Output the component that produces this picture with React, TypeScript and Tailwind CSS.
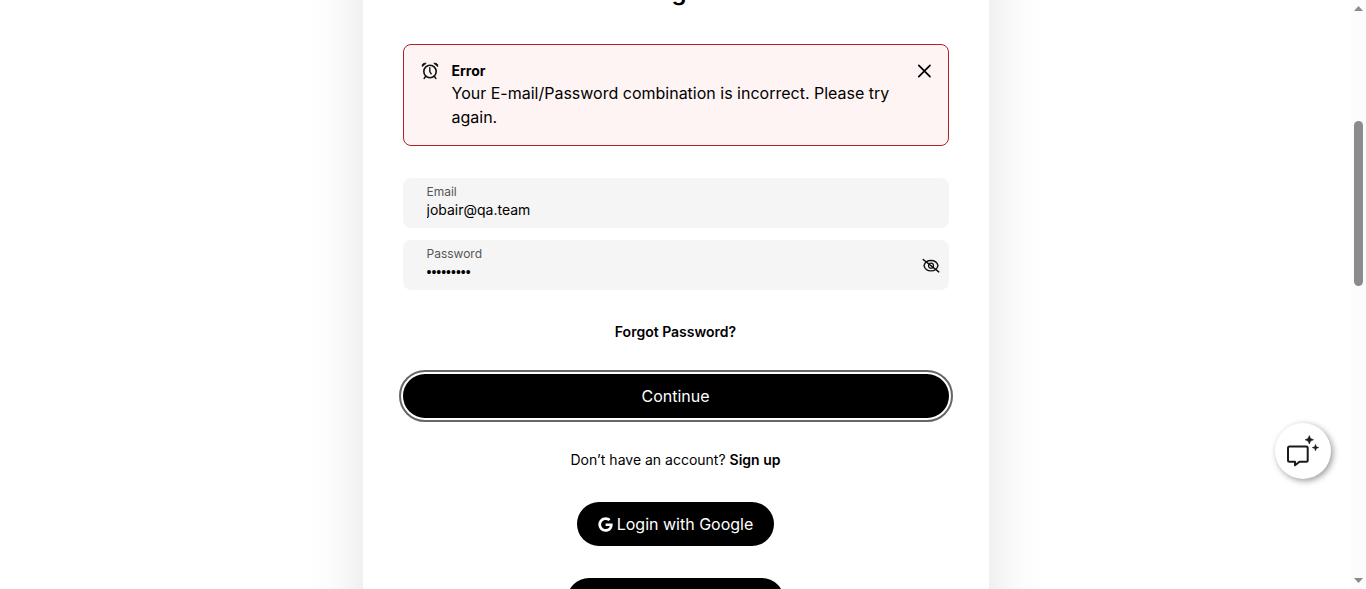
import type { ReactNode } from "react";
import { FaFacebookF, FaGoogle } from "react-icons/fa";

function AlarmIcon() {
  return (
    <svg viewBox="0 0 20 20" className="size-5 shrink-0" fill="none" stroke="#111" strokeWidth="1.6" aria-hidden="true">
      <circle cx="10" cy="10.5" r="6.2" />
      <path d="M9.800 6.800V10.600L11.200 12.800" strokeLinecap="round" strokeWidth="1.400" />
      <path d="M5.600 15.400L4.200 17.400M14.400 15.400L15.800 17.400" strokeLinecap="round" />
      <path d="M2.300 5.600V3.600L4 2.300H6.200ZM17.700 5.600V3.600L16 2.300H13.800Z" fill="#111" strokeWidth="0.900" strokeLinejoin="round" />
    </svg>
  );
}

function CloseIcon() {
  return (
    <svg viewBox="0 0 16 16" className="size-4" stroke="#000" strokeWidth="1.7" strokeLinecap="round" aria-hidden="true">
      <path d="M2.8 2.3L14 13.7M14 2.3L2.8 13.7" />
    </svg>
  );
}

function EyeOffIcon() {
  return (
    <svg viewBox="0 0 20 20" className="size-5" fill="none" stroke="#111" strokeWidth="1.4" strokeLinecap="round" aria-hidden="true">
      <path d="M3 10.700C3.800 7.400 6.600 5.500 10 5.500S16.200 7.400 17 10.700C16.200 14 13.400 15.900 10 15.900S3.800 14 3 10.700Z" />
      <circle cx="10" cy="10.700" r="2.500" strokeWidth="1.200" />
      <path d="M2.200 4.500L17.800 16.900" strokeWidth="1.500" />
    </svg>
  );
}

function ChatIcon() {
  return (
    <svg viewBox="0 0 34 34" className="size-[34px]" aria-hidden="true">
      <path
        d="M3.500 12.600H20.200A1.500 1.500 0 0 1 21.700 14.100V26.200A1.500 1.500 0 0 1 20.200 27.700H13.500L9 31.300V27.700H3.500A1.500 1.500 0 0 1 2 26.200V14.100A1.500 1.500 0 0 1 3.500 12.600Z"
        fill="none"
        stroke="#1a1a1a"
        strokeWidth="2"
        strokeLinejoin="round"
      />
      <path d="M23.300 1.500L24.600 4.500L27.600 5.800L24.600 7.100L23.300 10.100L22 7.100L19 5.800L22 4.500Z" fill="#1a1a1a" stroke="#1a1a1a" strokeWidth="0.500" />
      <path d="M29.500 10.200L30.400 12.700L32.900 13.600L30.400 14.500L29.500 17L28.600 14.500L26.100 13.600L28.600 12.700Z" fill="#1a1a1a" stroke="#1a1a1a" strokeWidth="0.400" />
    </svg>
  );
}

type FieldProps = {
  id: string;
  label: string;
  type: string;
  value: string;
  children?: ReactNode;
};

function Field({ id, label, type, value, children }: FieldProps) {
  return (
    <div className="flex h-[50px] items-center gap-2 rounded-lg bg-[#f5f5f5] pr-2 pl-6">
      <div className="flex min-w-0 flex-1 flex-col pb-0.5">
        <label htmlFor={id} className="text-xs leading-4 text-[#555]">
          {label}
        </label>
        <input
          id={id}
          type={type}
          defaultValue={value}
          className={
            type === "password"
              ? "h-5 w-full bg-transparent font-['Liberation_Sans',sans-serif] text-sm leading-5 text-black outline-none"
              : "h-5 w-full bg-transparent text-sm leading-5 text-black outline-none"
          }
        />
      </div>
      {children}
    </div>
  );
}

function SocialButton({ icon, children }: { icon: ReactNode; children: ReactNode }) {
  return (
    <button type="button" className="flex h-11 items-center gap-1 rounded-full bg-black px-[21px] text-base whitespace-nowrap text-white">
      {icon}
      {children}
    </button>
  );
}

function ScrollRail() {
  return (
    <div className="flex w-[15px] shrink-0 flex-col items-center bg-[#fcfcfc] py-1.5" aria-hidden="true">
      <svg viewBox="0 0 9 5" className="h-[5px] w-[9px]" fill="#8b8b8b">
        <path d="M4.500 0L9 5H0Z" />
      </svg>
      <div className="mt-[110px] h-[165px] w-[9px] rounded-full bg-[#8b8b8b]" />
      <svg viewBox="0 0 9 5" className="mt-auto h-[5px] w-[9px]" fill="#8b8b8b">
        <path d="M0 0H9L4.500 5Z" />
      </svg>
    </div>
  );
}

export default function App() {
  return (
    <div className="flex h-screen overflow-hidden bg-white font-['Inter',sans-serif] text-black">
      <main className="flex min-w-0 flex-1 justify-center overflow-hidden">
        <div className="-mt-16 -mb-16 flex h-max w-full max-w-[626px] flex-col bg-white px-10 pt-10 pb-24 shadow-[0_0_54px_rgba(0,0,0,0.12)]">
          <h1 className="text-center text-2xl leading-8 font-semibold">Login</h1>

          <div role="alert" className="mt-9 flex items-start gap-3 rounded-lg border border-[#b3202a] bg-[#fef4f3] p-4">
            <AlarmIcon />
            <div className="min-w-0 flex-1">
              <p className="text-sm leading-5 font-bold">Error</p>
              <p className="text-base leading-6">Your E-mail/Password combination is incorrect. Please try again.</p>
            </div>
            <button type="button" aria-label="Close" className="flex h-5 items-center">
              <CloseIcon />
            </button>
          </div>

          <form className="mt-8 flex flex-col" onSubmit={(event) => event.preventDefault()}>
            <div className="flex flex-col gap-3">
              <Field id="email" label="Email" type="email" value="jobair@qa.team" />
              <Field id="password" label="Password" type="password" value="password1">
                <button type="button" aria-label="Show password">
                  <EyeOffIcon />
                </button>
              </Field>
            </div>
            <a href="#forgot" className="mt-8 self-center text-sm leading-5 font-semibold">
              Forgot Password?
            </a>
            <button
              type="submit"
              className="mt-8 h-11 w-full rounded-full bg-black text-base text-white outline-2 outline-offset-2 outline-[#666]"
            >
              Continue
            </button>
          </form>

          <p className="mt-8 text-center text-sm leading-5">
            Don’t have an account?{" "}
            <a href="#signup" className="font-semibold">
              Sign up
            </a>
          </p>

          <div className="mt-8 flex flex-col items-center gap-8">
            <SocialButton icon={<FaGoogle className="size-[15px]" />}>Login with Google</SocialButton>
            <SocialButton icon={<FaFacebookF className="size-[15px]" />}>Login with Facebook</SocialButton>
          </div>
        </div>
      </main>
      <ScrollRail />
      <button
        type="button"
        aria-label="Open chat"
        className="fixed right-[35px] bottom-[110px] flex size-14 items-center justify-center rounded-full bg-white shadow-[2px_2px_6px_rgba(0,0,0,0.4)]"
      >
        <ChatIcon />
      </button>
    </div>
  );
}
